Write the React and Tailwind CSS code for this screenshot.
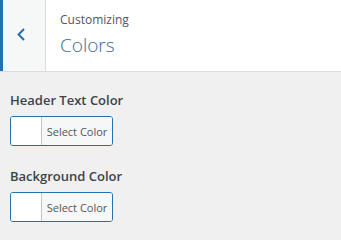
export default function App() {
  const font = { fontFamily: '"Open Sans", "Noto Sans", sans-serif' };
  const ColorButton = () => (
    <div className="flex w-[103px] h-[30px] border border-[#2271b1] rounded-[3px] overflow-hidden">
      <div className="w-[31px] h-full bg-white border-r border-[#c3c4c7]" />
      <div className="flex-1 flex items-center justify-center bg-[#f6f7f7] text-[11px] text-[#50575e] leading-none">
        Select Color
      </div>
    </div>
  );
  return (
    <div className="w-[341px] h-[240px] bg-[#f0f0f1] overflow-hidden" style={font}>
      <div className="flex h-[72px] bg-white border-b border-[#dcdcde]">
        <div className="w-[46px] h-full bg-[#f6f7f7] border-l-[3px] border-l-[#2271b1] border-r border-r-[#dcdcde] pl-[14px] pt-[28px]">
          <svg width="8" height="13" viewBox="0 0 8 13" fill="none">
            <polyline points="7,1 1.6,6.5 7,12" stroke="#2271b1" strokeWidth="2" strokeLinecap="butt" strokeLinejoin="miter" />
          </svg>
        </div>
        <div className="pl-[14px] pt-[11px]">
          <span className="block text-[12px] leading-[18px] text-[#50575e]">Customizing</span>
          <span className="block mt-[3px] text-[19px] leading-[26px] font-light text-[#3b6a96]">Colors</span>
        </div>
      </div>
      <div className="px-[10px] pt-[18px]">
        <div className="text-[13px] leading-[20px] font-semibold text-[#3c434a]">Header Text Color</div>
        <div className="mt-[6px]">
          <ColorButton />
        </div>
        <div className="mt-[20px] text-[13px] leading-[20px] font-semibold text-[#3c434a]">Background Color</div>
        <div className="mt-[6px]">
          <ColorButton />
        </div>
      </div>
    </div>
  );
}
